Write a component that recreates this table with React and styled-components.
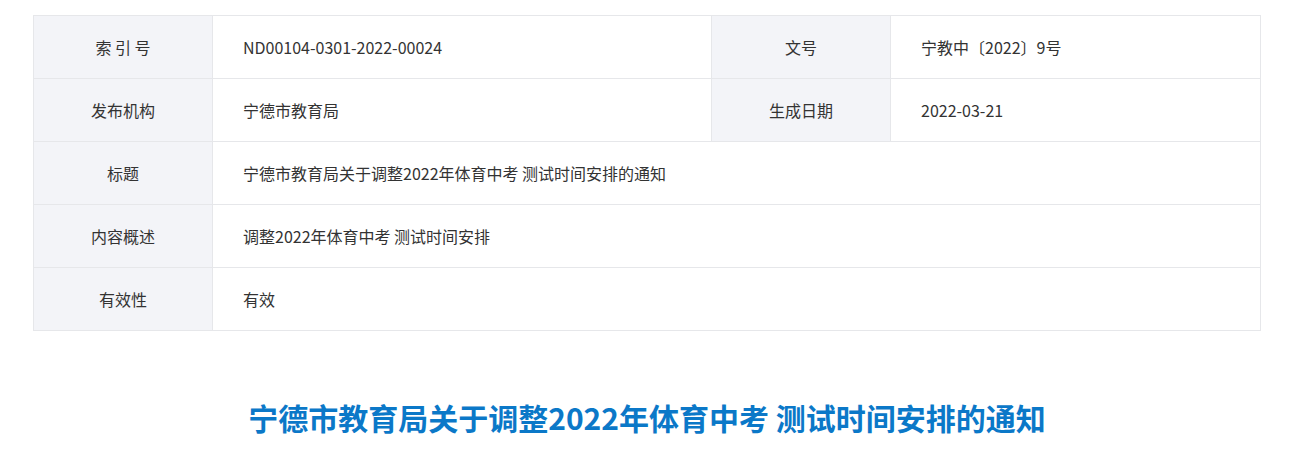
import React from "react";
import styled, { createGlobalStyle } from "styled-components";

const Global = createGlobalStyle`
  html, body { margin: 0; padding: 0; background: #fff; }
  body { font-family: "Noto Sans CJK SC", "Microsoft YaHei", sans-serif; color: #333; }
`;

const Page = styled.div`
  padding: 15px 35px 0 33px;
  width: 1228px;
`;

const Table = styled.table`
  width: 1228px;
  border-collapse: collapse;
  table-layout: fixed;
  font-size: 16px;
`;

const Row = styled.tr`
  height: 63px;
`;

const Label = styled.td`
  background: #f3f4f8;
  border: 1px solid #e6e7ea;
  text-align: center;
  color: #333;
  padding: 0;
`;

const Value = styled.td`
  border: 1px solid #e6e7ea;
  padding: 0 0 0 30px;
  color: #333;
  text-align: left;
`;

const Title = styled.h1`
  margin: 64px 0 0;
  text-align: center;
  font-size: 30px;
  line-height: 44px;
  font-weight: 700;
  color: #0b78c8;
  width: 1228px;
`;

export default function App() {
  return (
    <Page>
      <Global />
      <Table>
        <colgroup>
          <col style={{ width: 179 }} />
          <col style={{ width: 499 }} />
          <col style={{ width: 179 }} />
          <col />
        </colgroup>
        <tbody>
          <Row>
            <Label>索 引 号</Label>
            <Value>ND00104-0301-2022-00024</Value>
            <Label>文号</Label>
            <Value>宁教中〔2022〕9号</Value>
          </Row>
          <Row>
            <Label>发布机构</Label>
            <Value>宁德市教育局</Value>
            <Label>生成日期</Label>
            <Value>2022-03-21</Value>
          </Row>
          <Row>
            <Label>标题</Label>
            <Value colSpan={3}>宁德市教育局关于调整2022年体育中考 测试时间安排的通知</Value>
          </Row>
          <Row>
            <Label>内容概述</Label>
            <Value colSpan={3}>调整2022年体育中考 测试时间安排</Value>
          </Row>
          <Row>
            <Label>有效性</Label>
            <Value colSpan={3}>有效</Value>
          </Row>
        </tbody>
      </Table>
      <Title>宁德市教育局关于调整2022年体育中考 测试时间安排的通知</Title>
    </Page>
  );
}
